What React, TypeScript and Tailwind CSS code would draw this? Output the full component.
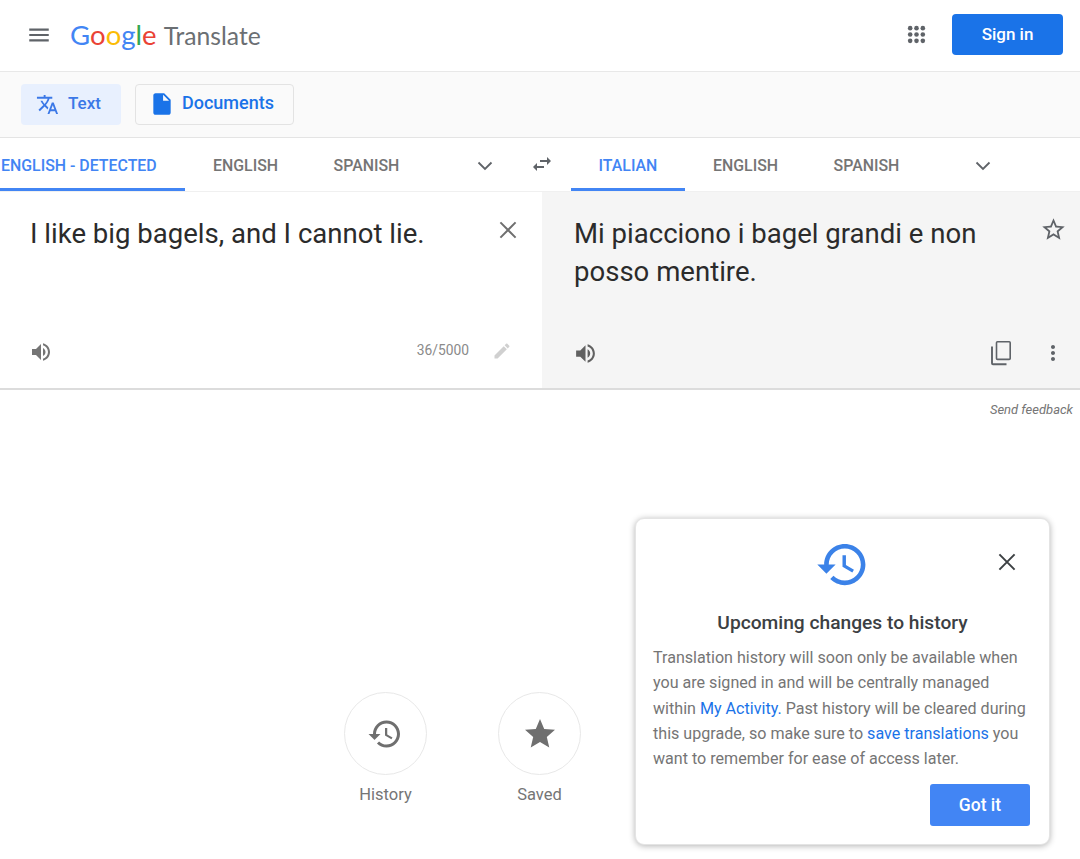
import React from "react";

const P = {
  menu: "M3 18h18v-2H3v2zm0-5h18v-2H3v2zm0-7v2h18V6H3z",
  translate: "M12.87 15.07l-2.54-2.51.03-.03c1.74-1.94 2.98-4.17 3.71-6.53H17V4h-7V2H8v2H1v1.99h11.17C11.5 7.92 10.44 9.75 9 11.35 8.07 10.32 7.3 9.19 6.69 8h-2c.73 1.63 1.73 3.17 2.98 4.56l-5.09 5.02L4 19l5-5 3.11 3.11.76-2.04zM18.5 10h-2L12 22h2l1.12-3h4.75L21 22h2l-4.5-12zm-2.62 7l1.62-4.33L19.12 17h-3.24z",
  doc: "M14 2H6c-1.1 0-2 .9-2 2v16c0 1.1.9 2 2 2h12c1.1 0 2-.9 2-2V8l-6-6zm-1 7V3.5L18.5 9H13z",
  history: "M13 3c-4.97 0-9 4.03-9 9H1l3.89 3.89.07.14L9 12H6c0-3.87 3.13-7 7-7s7 3.13 7 7-3.13 7-7 7c-1.93 0-3.68-.79-4.94-2.06l-1.42 1.42C8.27 19.99 10.51 21 13 21c4.97 0 9-4.03 9-9s-4.03-9-9-9zm-1 5v5l4.28 2.54.72-1.21-3.5-2.08V8H12z",
  star: "M12 17.27L18.18 21l-1.64-7.03L22 9.24l-7.19-.61L12 2 9.19 8.63 2 9.24l5.46 4.73L5.82 21z",
  starO: "M22 9.24l-7.19-.62L12 2 9.19 8.63 2 9.24l5.46 4.73L5.82 21 12 17.27 18.18 21l-1.63-7.03L22 9.24zM12 15.4l-3.76 2.27 1-4.28-3.32-2.88 4.38-.38L12 6.1l1.71 4.04 4.38.38-3.32 2.88 1 4.28L12 15.4z",
  volume: "M3 9v6h4l5 5V4L7 9H3zm13.5 3c0-1.77-1.02-3.29-2.5-4.03v8.05c1.48-.73 2.5-2.25 2.5-4.02zM14 3.23v2.06c2.89.86 5 3.54 5 6.71s-2.11 5.85-5 6.71v2.06c4.01-.91 7-4.49 7-8.77s-2.99-7.86-7-8.77z",
  swap: "M6.99 11L3 15l3.99 4v-3H14v-2H6.99v-3zM21 9l-3.99-4v3H10v2h7.01v3L21 9z",
  pencil: "M3 17.25V21h3.75L17.81 9.94l-3.75-3.75L3 17.25zM20.71 7.04c.39-.39.39-1.02 0-1.41l-2.34-2.34c-.39-.39-1.02-.39-1.41 0l-1.83 1.83 3.75 3.75 1.83-1.83z",
  more: "M12 8c1.1 0 2-.9 2-2s-.9-2-2-2-2 .9-2 2 .9 2 2 2zm0 2c-1.1 0-2 .9-2 2s.9 2 2 2 2-.9 2-2-.9-2-2-2zm0 6c-1.1 0-2 .9-2 2s.9 2 2 2 2-.9 2-2-.9-2-2-2z",
};

function Icon({ d, className }: { d: string; className: string }) {
  return (
    <svg viewBox="0 0 24 24" fill="currentColor" className={className}>
      <path d={d} />
    </svg>
  );
}

function Close({ className }: { className: string }) {
  return (
    <svg viewBox="0 0 24 24" fill="none" stroke="currentColor" strokeWidth="1.7" className={className}>
      <path d="M5.5 5.5l13 13M18.5 5.5l-13 13" />
    </svg>
  );
}

function Copy({ className }: { className: string }) {
  return (
    <svg viewBox="0 0 24 26" fill="none" stroke="currentColor" strokeWidth="1.6" className={className}>
      <path d="M7.5 2.8a1 1 0 0 1 1-1h11.7a1 1 0 0 1 1 1v15.6a1 1 0 0 1-1 1H8.5a1 1 0 0 1-1-1z" />
      <path d="M3 6.5v16.7a1 1 0 0 0 1 1h13.5" strokeWidth="1.9" />
    </svg>
  );
}

function Apps({ className }: { className: string }) {
  const pts = [4, 12, 20];
  return (
    <svg viewBox="0 0 24 24" fill="currentColor" className={className}>
      {pts.map((y) => pts.map((x) => <circle key={x + "-" + y} cx={x} cy={y} r="2.9" />))}
    </svg>
  );
}

function Chevron({ className }: { className: string }) {
  return (
    <svg viewBox="0 0 18 18" fill="none" stroke="currentColor" strokeWidth="1.8" className={className}>
      <path d="M2.5 5.5L9 12l6.5-6.5" />
    </svg>
  );
}

function Tab({ label, active, className }: { label: string; active?: boolean; className: string }) {
  return (
    <div
      className={
        "h-[53px] flex items-center border-b-[3px] pt-[5px] text-[15.9px] font-medium whitespace-nowrap " +
        (active ? "border-[#4285f4] text-[#4285f4] " : "border-transparent text-[#757575] ") +
        className
      }
    >
      {label}
    </div>
  );
}

export default function App() {
  return (
    <div className="w-[1080px] h-[859px] overflow-hidden bg-white font-['Roboto',sans-serif]">
      <header className="h-[72px] border-b border-[#e8e8e8] flex items-center pb-[2px]">
        <Icon d={P.menu} className="w-[26px] h-[26px] ml-[26px] text-[#5f6368]" />
        <div className="ml-[18px] flex items-baseline font-['Lato',sans-serif] leading-none">
          <span className="text-[27.5px] text-[#4285f4]">G</span>
          <span className="text-[27.5px] text-[#ea4335]">o</span>
          <span className="text-[27.5px] text-[#fbbc05]">o</span>
          <span className="text-[27.5px] text-[#4285f4]">g</span>
          <span className="text-[27.5px] text-[#34a853]">l</span>
          <span className="text-[27.5px] text-[#ea4335]">e</span>
          <span className="ml-[7px] text-[24.7px] text-[#6b6f73]">Translate</span>
        </div>
        <Apps className="w-[19px] h-[19px] ml-auto text-[#5f6368]" />
        <button className="ml-[26px] mr-[17px] w-[111px] h-[41px] rounded-[4px] bg-[#1a73e8] text-white text-[17px] font-medium">
          Sign in
        </button>
      </header>

      <div className="h-[66px] bg-[#fafafa] border-b border-[#e4e4e4] flex items-center pl-[21px] pb-[1px] gap-[14px]">
        <div className="w-[100px] h-[41px] rounded-[4px] bg-[#e8f0fe] flex items-center pl-[15px] text-[#3b78e7] text-[17px] font-medium">
          <Icon d={P.translate} className="w-[23px] h-[23px]" />
          <span className="ml-[9px] -mt-[1px]">Text</span>
        </div>
        <div className="w-[159px] h-[41px] rounded-[4px] border border-[#e3e3e3] flex items-center pl-[13px] text-[#1a73e8] text-[18px] font-medium">
          <Icon d={P.doc} className="w-[26px] h-[26px]" />
          <span className="ml-[7px] -mt-[3px]">Documents</span>
        </div>
      </div>

      <div className="h-[53px] flex items-stretch">
        <Tab label="ENGLISH - DETECTED" active className="w-[185px] pl-[1px]" />
        <Tab label="ENGLISH" className="w-[121px] justify-center" />
        <Tab label="SPANISH" className="w-[121px] justify-center" />
        <div className="w-[144px] flex items-center pt-[2px]">
          <Chevron className="w-[18px] h-[18px] ml-[49px] text-[#5f6368]" />
          <Icon d={P.swap} className="w-[24px] h-[24px] ml-[36px] -mt-[3px] text-[#5f6368]" />
        </div>
        <Tab label="ITALIAN" active className="w-[114px] justify-center" />
        <Tab label="ENGLISH" className="w-[121px] justify-center" />
        <Tab label="SPANISH" className="w-[121px] justify-center" />
        <div className="flex items-center pt-[2px]">
          <Chevron className="w-[18px] h-[18px] ml-[47px] text-[#5f6368]" />
        </div>
      </div>

      <div className="h-[199px] flex border-b-2 border-[#dcdcdc] border-t border-t-[#f0f0f0]">
        <div className="w-[542px] flex flex-col pl-[30px] pr-[22px] pt-[23px] pb-[24px] justify-between">
          <div className="flex items-start justify-between">
            <div className="text-[27.55px] leading-[38px] text-[#2b2b2b]">I like big bagels, and I cannot lie.</div>
            <Close className="w-[28px] h-[28px] mt-[1px] mr-[-2px] text-[#6f6f6f]" />
          </div>
          <div className="flex items-center">
            <Icon d={P.volume} className="w-[24px] h-[24px] -ml-[1px] text-[#757575]" />
            <span className="ml-auto -mt-[3px] text-[13.8px] text-[#8a8a8a]">36/5000</span>
            <Icon d={P.pencil} className="w-[20px] h-[20px] ml-[23px] mr-[8px] -mt-[3px] text-[#d0d0d0]" />
          </div>
        </div>
        <div className="flex-1 bg-[#f5f5f5] flex flex-col pl-[32px] pr-[14px] pt-[23px] pb-[22px] justify-between">
          <div className="flex items-start justify-between">
            <div className="w-[420px] text-[27.55px] leading-[37.5px] text-[#2b2b2b]">Mi piacciono i bagel grandi e non posso mentire.</div>
            <Icon d={P.starO} className="w-[27px] h-[27px] mt-[1px] -mr-[1px] text-[#5f6368]" />
          </div>
          <div className="flex items-center">
            <Icon d={P.volume} className="w-[25px] h-[25px] -ml-[1px] text-[#616161]" />
            <Copy className="w-[24px] h-[26px] ml-auto text-[#5f6368]" />
            <Icon d={P.more} className="w-[24px] h-[24px] ml-[28px] mr-[1px] text-[#5f6368]" />
          </div>
        </div>
      </div>

      <div className="h-[36px] flex items-center justify-end pr-[7px] pt-[3px] text-[13px] italic text-[#757575]">
        Send feedback
      </div>

      <div className="mt-[92px] flex items-start">
        <div className="ml-[344px] mt-[174px] flex gap-[71px]">
          <div className="flex flex-col items-center w-[83px]">
            <div className="w-[83px] h-[83px] rounded-full border border-[#e8e8e8] flex items-center justify-center">
              <Icon d={P.history} className="w-[36px] h-[36px] -ml-[2px] text-[#6f6f6f]" />
            </div>
            <span className="mt-[10px] text-[16.5px] leading-[20px] text-[#757575]">History</span>
          </div>
          <div className="flex flex-col items-center w-[83px]">
            <div className="w-[83px] h-[83px] rounded-full border border-[#e8e8e8] flex items-center justify-center">
              <Icon d={P.star} className="w-[36px] h-[36px] text-[#6f6f6f]" />
            </div>
            <span className="mt-[10px] text-[16.5px] leading-[20px] text-[#757575]">Saved</span>
          </div>
        </div>
        <div className="ml-[54px] w-[415px] h-[327px] rounded-[9px] bg-white border border-[#e4e4e4] shadow-[0_1px_6px_rgba(0,0,0,0.3)] flex flex-col px-[17px]">
          <div className="relative h-[89px] flex justify-center">
            <Icon d={P.history} className="w-[55px] h-[55px] mt-[18px] text-[#3b82e8]" />
            <Close className="absolute right-[11px] top-[29px] w-[28px] h-[28px] text-[#3c4043]" />
          </div>
          <div className="text-center text-[19.2px] leading-[30px] font-medium text-[#3c4043]">
            Upcoming changes to history
          </div>
          <p className="mt-[7px] text-[16.1px] leading-[25.3px] text-[#757575] whitespace-nowrap">
            Translation history will soon only be available when<br />
            you are signed in and will be centrally managed<br />
            within <span className="text-[#1a73e8]">My Activity.</span> Past history will be cleared during<br />
            this upgrade, so make sure to <span className="text-[#1a73e8]">save translations</span> you<br />
            want to remember for ease of access later.
          </p>
          <button className="mt-[13px] self-end w-[100px] h-[42px] mr-[2px] rounded-[3px] bg-[#4285f4] text-white text-[17.5px] font-medium">
            Got it
          </button>
        </div>
      </div>
    </div>
  );
}
